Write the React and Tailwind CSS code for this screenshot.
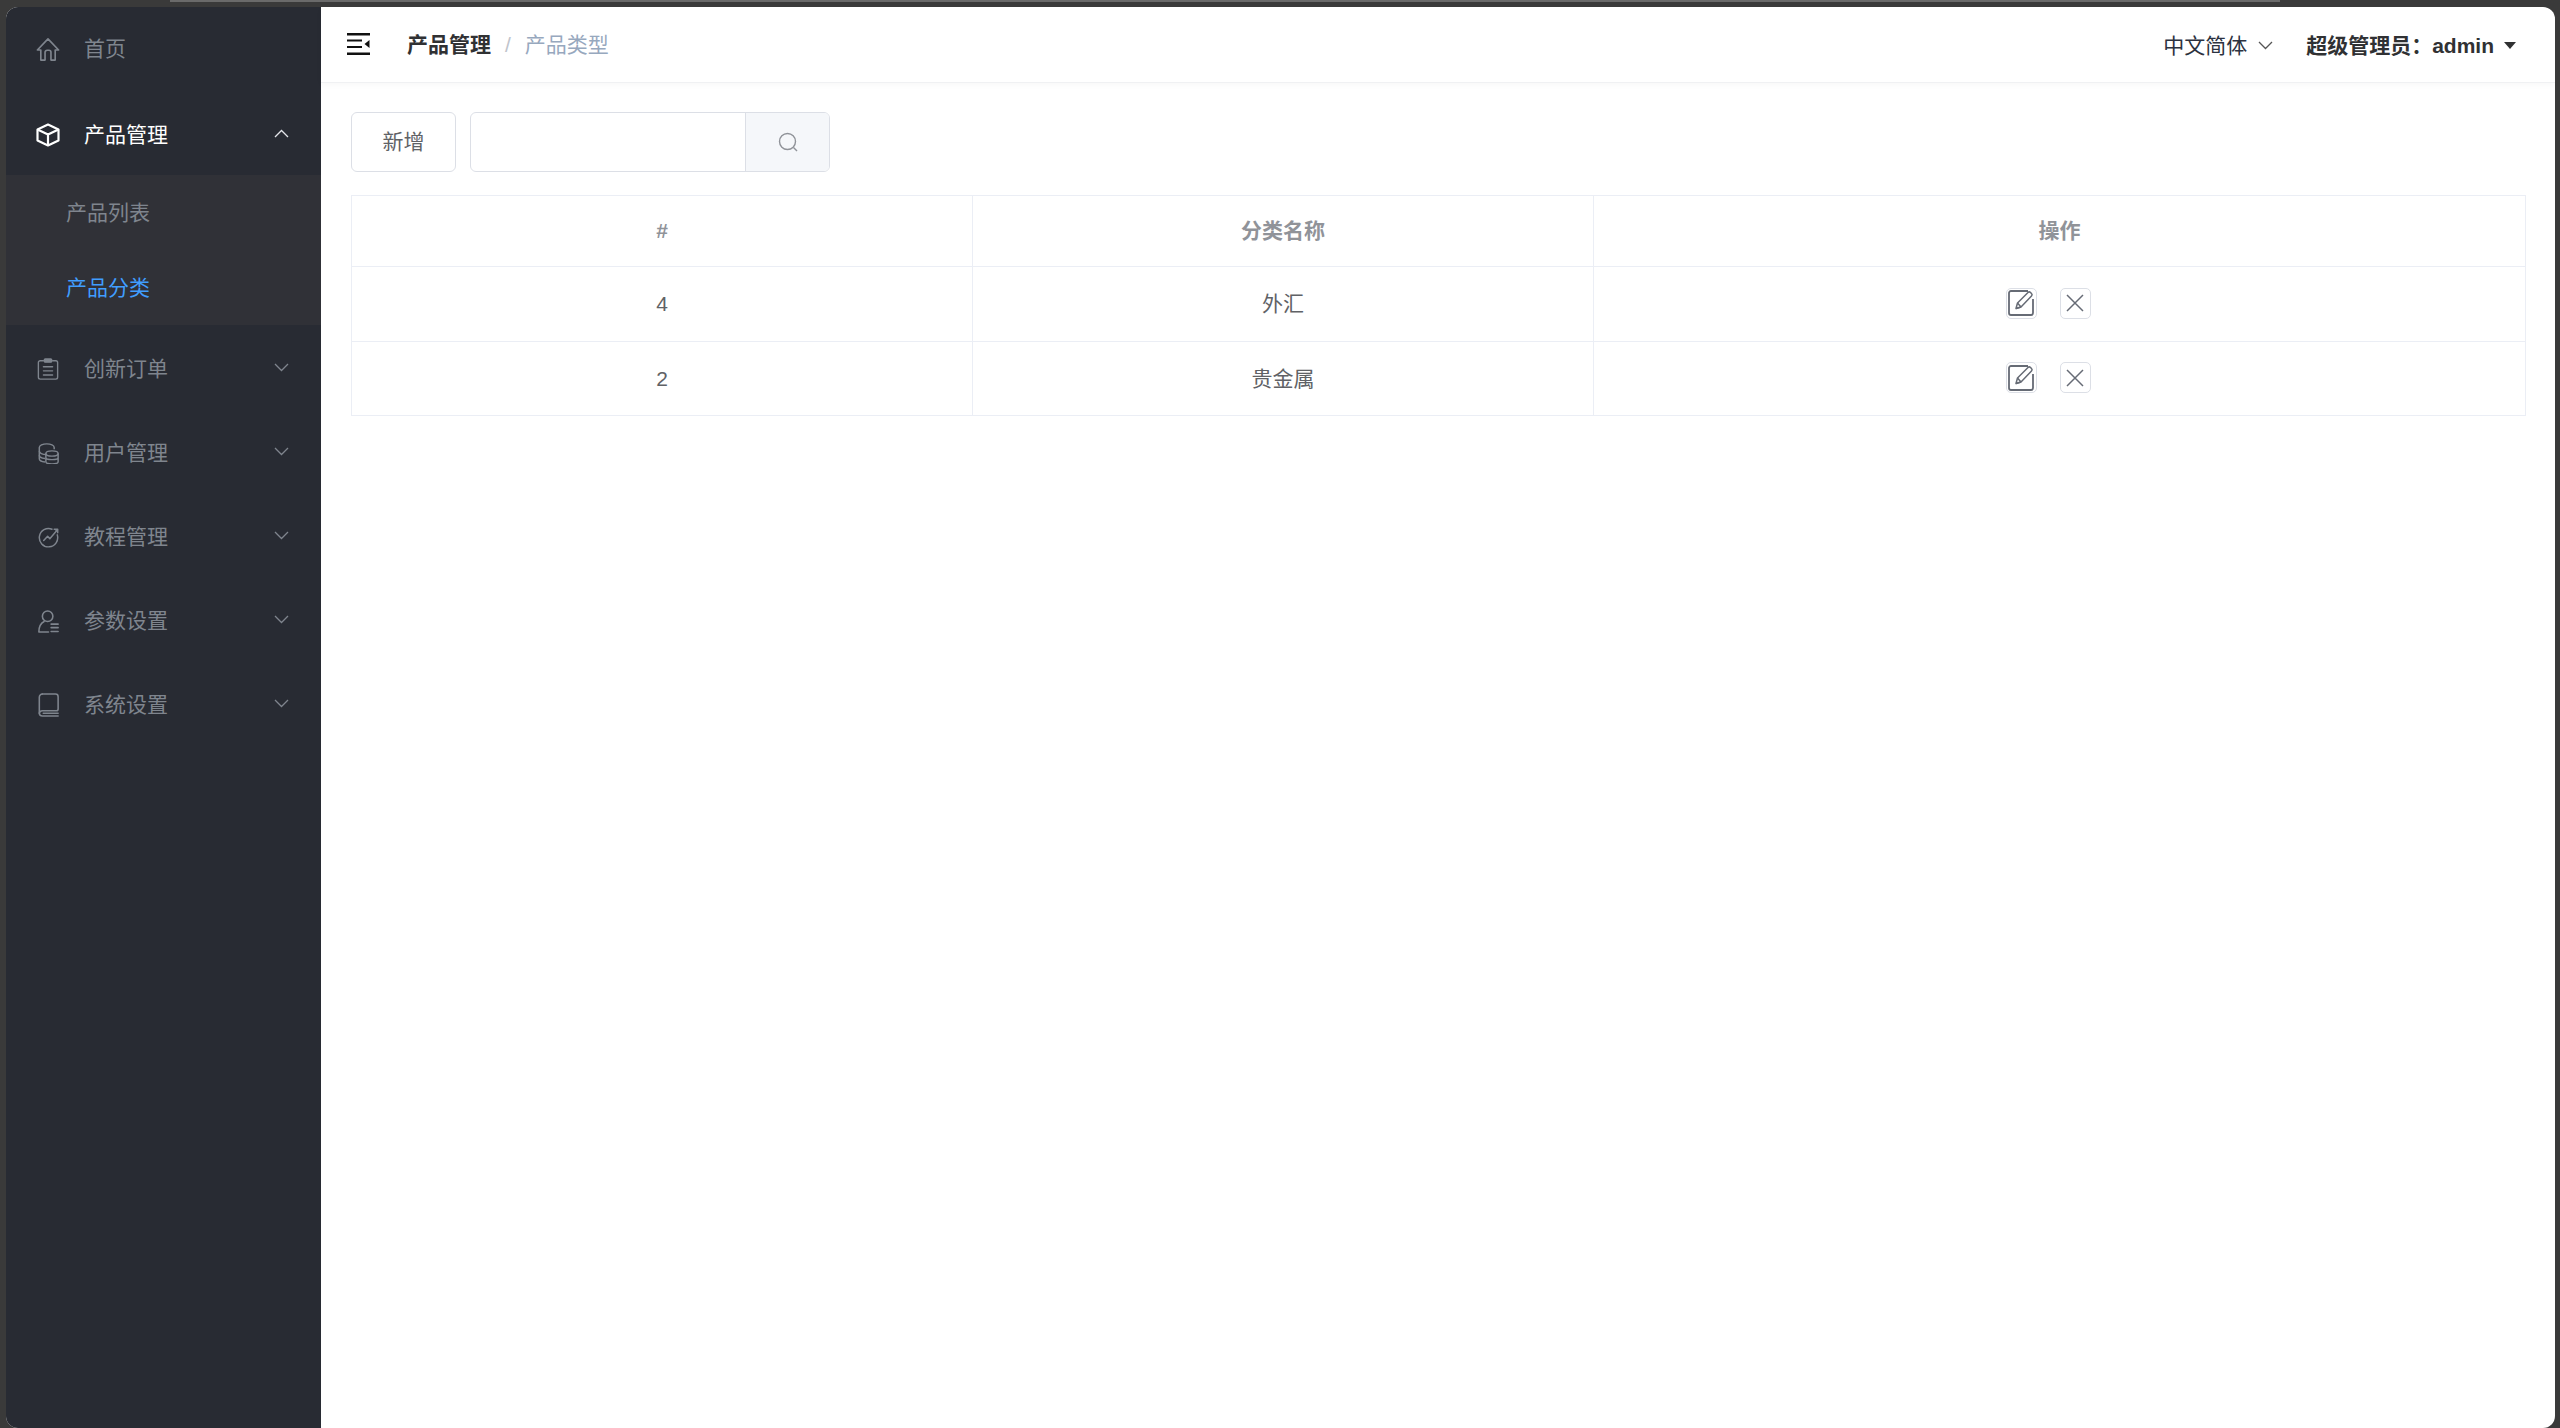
import React from 'react';

const font = { fontFamily: '"Liberation Sans", "Noto Sans CJK SC", sans-serif' };

const IconHome = () => (
  <svg width="25" height="25" viewBox="0 0 26 26" fill="none" stroke="currentColor" strokeWidth="1.800" strokeLinejoin="round">
    <path d="M1.500 13.500 13 1.500l11.500 12h-3.700V24.500h-4.600V16a2.200 2.200 0 0 0-2.200-2.200h-2A2.200 2.200 0 0 0 9.800 16v8.500H5.200V13.500z" />
  </svg>
);

const IconBox = () => (
  <svg width="24" height="24" viewBox="0 0 24 24" fill="none" stroke="currentColor" strokeWidth="2.200" strokeLinejoin="round">
    <path d="M12 1.500 22.500 6.500v11L12 22.500 1.500 17.500v-11z" />
    <path d="M1.500 6.500 12 11.500l10.500-5M12 11.500v11" />
  </svg>
);

const IconClipboard = () => (
  <svg width="22" height="22" viewBox="0 0 24 24" fill="none" stroke="currentColor" strokeWidth="1.500" strokeLinecap="round">
    <path d="M7 3H3.500A2 2 0 0 0 1.500 5v16a2 2 0 0 0 2 2h17a2 2 0 0 0 2-2V5a2 2 0 0 0-2-2H17" />
    <rect x="8" y="1" width="8" height="3.500" rx="1" fill="currentColor" />
    <path d="M7 9.500h10M7 14h10M7 18.500h10" />
  </svg>
);

const IconDb = () => (
  <svg width="21" height="21" viewBox="0 0 24 24" fill="none" stroke="currentColor" strokeWidth="1.700">
    <path d="M18.500 7V5c0-2.200-3.800-4-8.500-4S1.500 2.800 1.500 5v13c0 1.800 2.800 3.300 6.500 3.700" />
    <path d="M1.500 9.500c0 2 3.500 3.700 8 3.700M1.500 14c0 1.800 2.800 3.300 6.500 3.700" />
    <ellipse cx="16" cy="12" rx="7" ry="3" />
    <path d="M9 12v9.500c0 1.400 3.100 2.500 7 2.500s7-1.100 7-2.500V12M9 16.500c0 1.400 3.100 2.500 7 2.500s7-1.100 7-2.500" />
  </svg>
);

const IconChart = () => (
  <svg width="21" height="21" viewBox="0 0 24 24" fill="none" stroke="currentColor" strokeWidth="1.700" strokeLinecap="round" strokeLinejoin="round">
    <path d="M16 2.500A10.500 10.500 0 1 0 22 9" />
    <path d="M6.500 15.500 11 10.500l2.500 3L21.500 4" />
    <path d="M18.500 2.500h4v4" fill="currentColor" />
  </svg>
);

const IconUserList = () => (
  <svg width="21" height="23" viewBox="0 0 24 26" fill="none" stroke="currentColor" strokeWidth="1.800" strokeLinecap="round">
    <circle cx="11" cy="7" r="6" />
    <path d="M1 25c0-6 2-10 6-12M1 25h11" />
    <path d="M15 16h8M15 20h8M15 24.500h8" />
  </svg>
);

const IconBook = () => (
  <svg width="21" height="24" viewBox="0 0 24 27" fill="none" stroke="currentColor" strokeWidth="1.800" strokeLinecap="round">
    <path d="M5 1h15a3 3 0 0 1 3 3v14a2 2 0 0 1-2 2H5a3.500 3.500 0 0 0-3.500 3A3.500 3.500 0 0 0 5 26h18" />
    <path d="M1.500 23V4.500A3.500 3.500 0 0 1 5 1M6 23h17" />
  </svg>
);

const Chevron = ({ up, className = '' }) => (
  <svg width="15" height="9" viewBox="0 0 15 9" fill="none" stroke="currentColor" strokeWidth="1.300" className={className}>
    <path d={up ? 'M1 8l6.500-6.500L14 8' : 'M1 1l6.500 6.500L14 1'} />
  </svg>
);

const MenuItem = ({ icon, label, open, active, first }) => (
  <div className={`h-[84px] flex items-center pl-[30px] pr-[32px] ${first ? '' : 'pt-[4px]'} ${active ? 'text-white' : 'text-[#7f858e]'}`}>
    <span className="w-[48px] flex"><span className="w-[24px] flex justify-center">{icon}</span></span>
    <span className="text-[21px] flex-1">{label}</span>
    {!first && <Chevron up={open} className={active ? 'text-[#e4e6ea] mb-[4px]' : 'text-[#7f858e] mb-[4px]'} />}
  </div>
);

const Sidebar = () => (
  <aside className="w-[315px] shrink-0 bg-[#282b33] h-full">
    <MenuItem icon={<IconHome />} label="首页" first />
    <MenuItem icon={<IconBox />} label="产品管理" open active />
    <div className="bg-[#303137] text-[21px]">
      <div className="h-[75px] flex items-center pl-[60px] text-[#7f858e]">产品列表</div>
      <div className="h-[75px] flex items-center pl-[60px] text-[#409eff]">产品分类</div>
    </div>
    <MenuItem icon={<IconClipboard />} label="创新订单" />
    <MenuItem icon={<IconDb />} label="用户管理" />
    <MenuItem icon={<IconChart />} label="教程管理" />
    <MenuItem icon={<IconUserList />} label="参数设置" />
    <MenuItem icon={<IconBook />} label="系统设置" />
  </aside>
);

const Header = () => (
  <header className="h-[76px] shrink-0 flex items-center border-b border-[#f0f1f3] shadow-[0_2px_6px_rgba(0,0,0,0.03)] pl-[26px] pr-[39px]">
    <svg width="23" height="22" viewBox="0 0 23 22" className="text-[#111] mb-[2px]" fill="currentColor">
      <rect x="0" y="0" width="23" height="2.500" />
      <rect x="0" y="6.500" width="15" height="2" />
      <rect x="0" y="13" width="15" height="2" />
      <rect x="0" y="19.500" width="23" height="2.500" />
      <path d="M22.500 7v8l-5-4z" />
    </svg>
    <div className="ml-[37px] flex items-center text-[21px] pt-[1px]">
      <span className="font-bold text-[#303133]">产品管理</span>
      <span className="mx-[14px] text-[#c0c4cc]">/</span>
      <span className="text-[#97a8be]">产品类型</span>
    </div>
    <div className="ml-auto flex items-center pt-[2px]">
      <span className="text-[21px] text-[#2c3240]">中文简体</span>
      <Chevron className="ml-[11px] text-[#555]" />
      <span className="ml-[33px] text-[21px] font-bold text-[#303133]">超级管理员：admin</span>
      <span className="ml-[10px] w-0 h-0 border-x-[6px] border-x-transparent border-t-[7px] border-t-[#303133]" />
    </div>
  </header>
);

const IconBtn = ({ children }) => (
  <button className="w-[31px] h-[31px] rounded-[5px] border border-[#dcdfe6] flex items-center justify-center text-[#666b75] bg-white">
    {children}
  </button>
);

const Row = ({ id, name, height }) => (
  <tr className={`${height} border-t border-[#ebeef5]`}>
    <td className="border-r border-[#ebeef5] text-center">{id}</td>
    <td className="border-r border-[#ebeef5] text-center">{name}</td>
    <td className="text-center">
      <div className="flex items-center justify-center gap-[23px] mb-[2px] pr-[23px]">
        <IconBtn>
          <svg width="26" height="26" viewBox="0 0 26 26" fill="none" stroke="currentColor" strokeWidth="1.500" strokeLinejoin="round">
            <path d="M20 1H3a2 2 0 0 0-2 2v20a2 2 0 0 0 2 2h20a2 2 0 0 0 2-2V9" strokeWidth="1.800" />
            <path d="M8 18.500 9.500 13 20 2.500a1.800 1.800 0 0 1 2.500 0l1 1a1.800 1.800 0 0 1 0 2.500L13 17z" />
            <path d="M8 18.500 13 17M9.500 13l3.500 4" />
          </svg>
        </IconBtn>
        <IconBtn>
          <svg width="18" height="18" viewBox="0 0 18 18" fill="none" stroke="currentColor" strokeWidth="1.500">
            <path d="M1 1l16 16M17 1 1 17" />
          </svg>
        </IconBtn>
      </div>
    </td>
  </tr>
);

export default function App() {
  return (
    <div style={font} className="h-[1428px] w-[2560px] bg-[#3a3a3a] pt-[7px] pl-[6px] pr-[5px] relative overflow-hidden">
      <div className="absolute top-0 left-[170px] w-[2110px] h-[2px] bg-[#6a6a6a]" />
      <div className="flex h-full bg-white rounded-[12px] overflow-hidden">
        <Sidebar />
        <main className="flex-1 flex flex-col min-w-0">
          <Header />
          <div className="pt-[29px] pl-[30px] pr-[23px]">
            <div className="flex items-start gap-[14px] text-[21px]">
              <button className="w-[105px] h-[60px] rounded-[6px] border border-[#dcdfe6] text-[#606266] bg-white">新增</button>
              <div className="flex w-[360px] h-[60px] rounded-[6px] border border-[#dcdfe6] overflow-hidden">
                <div className="flex-1" />
                <div className="w-[84px] bg-[#f5f7fa] border-l border-[#dcdfe6] flex items-center justify-center text-[#909399]">
                  <svg width="20" height="20" viewBox="0 0 20 20" fill="none" stroke="currentColor" strokeWidth="1.400">
                    <circle cx="9.500" cy="9.500" r="8" />
                    <path d="M15.500 15.500 19 19" />
                  </svg>
                </div>
              </div>
            </div>
            <table className="mt-[23px] w-[2175px] table-fixed border border-[#ebeef5] text-[21px] text-[#606266] border-collapse">
              <colgroup>
                <col className="w-[621px]" />
                <col className="w-[621px]" />
                <col />
              </colgroup>
              <thead>
                <tr className="h-[71px] font-bold text-[#909399]">
                  <th className="border-r border-[#ebeef5]">#</th>
                  <th className="border-r border-[#ebeef5]">分类名称</th>
                  <th>操作</th>
                </tr>
              </thead>
              <tbody>
                <Row id="4" name="外汇" height="h-[75px]" />
                <Row id="2" name="贵金属" height="h-[74px]" />
              </tbody>
            </table>
          </div>
        </main>
      </div>
    </div>
  );
}
